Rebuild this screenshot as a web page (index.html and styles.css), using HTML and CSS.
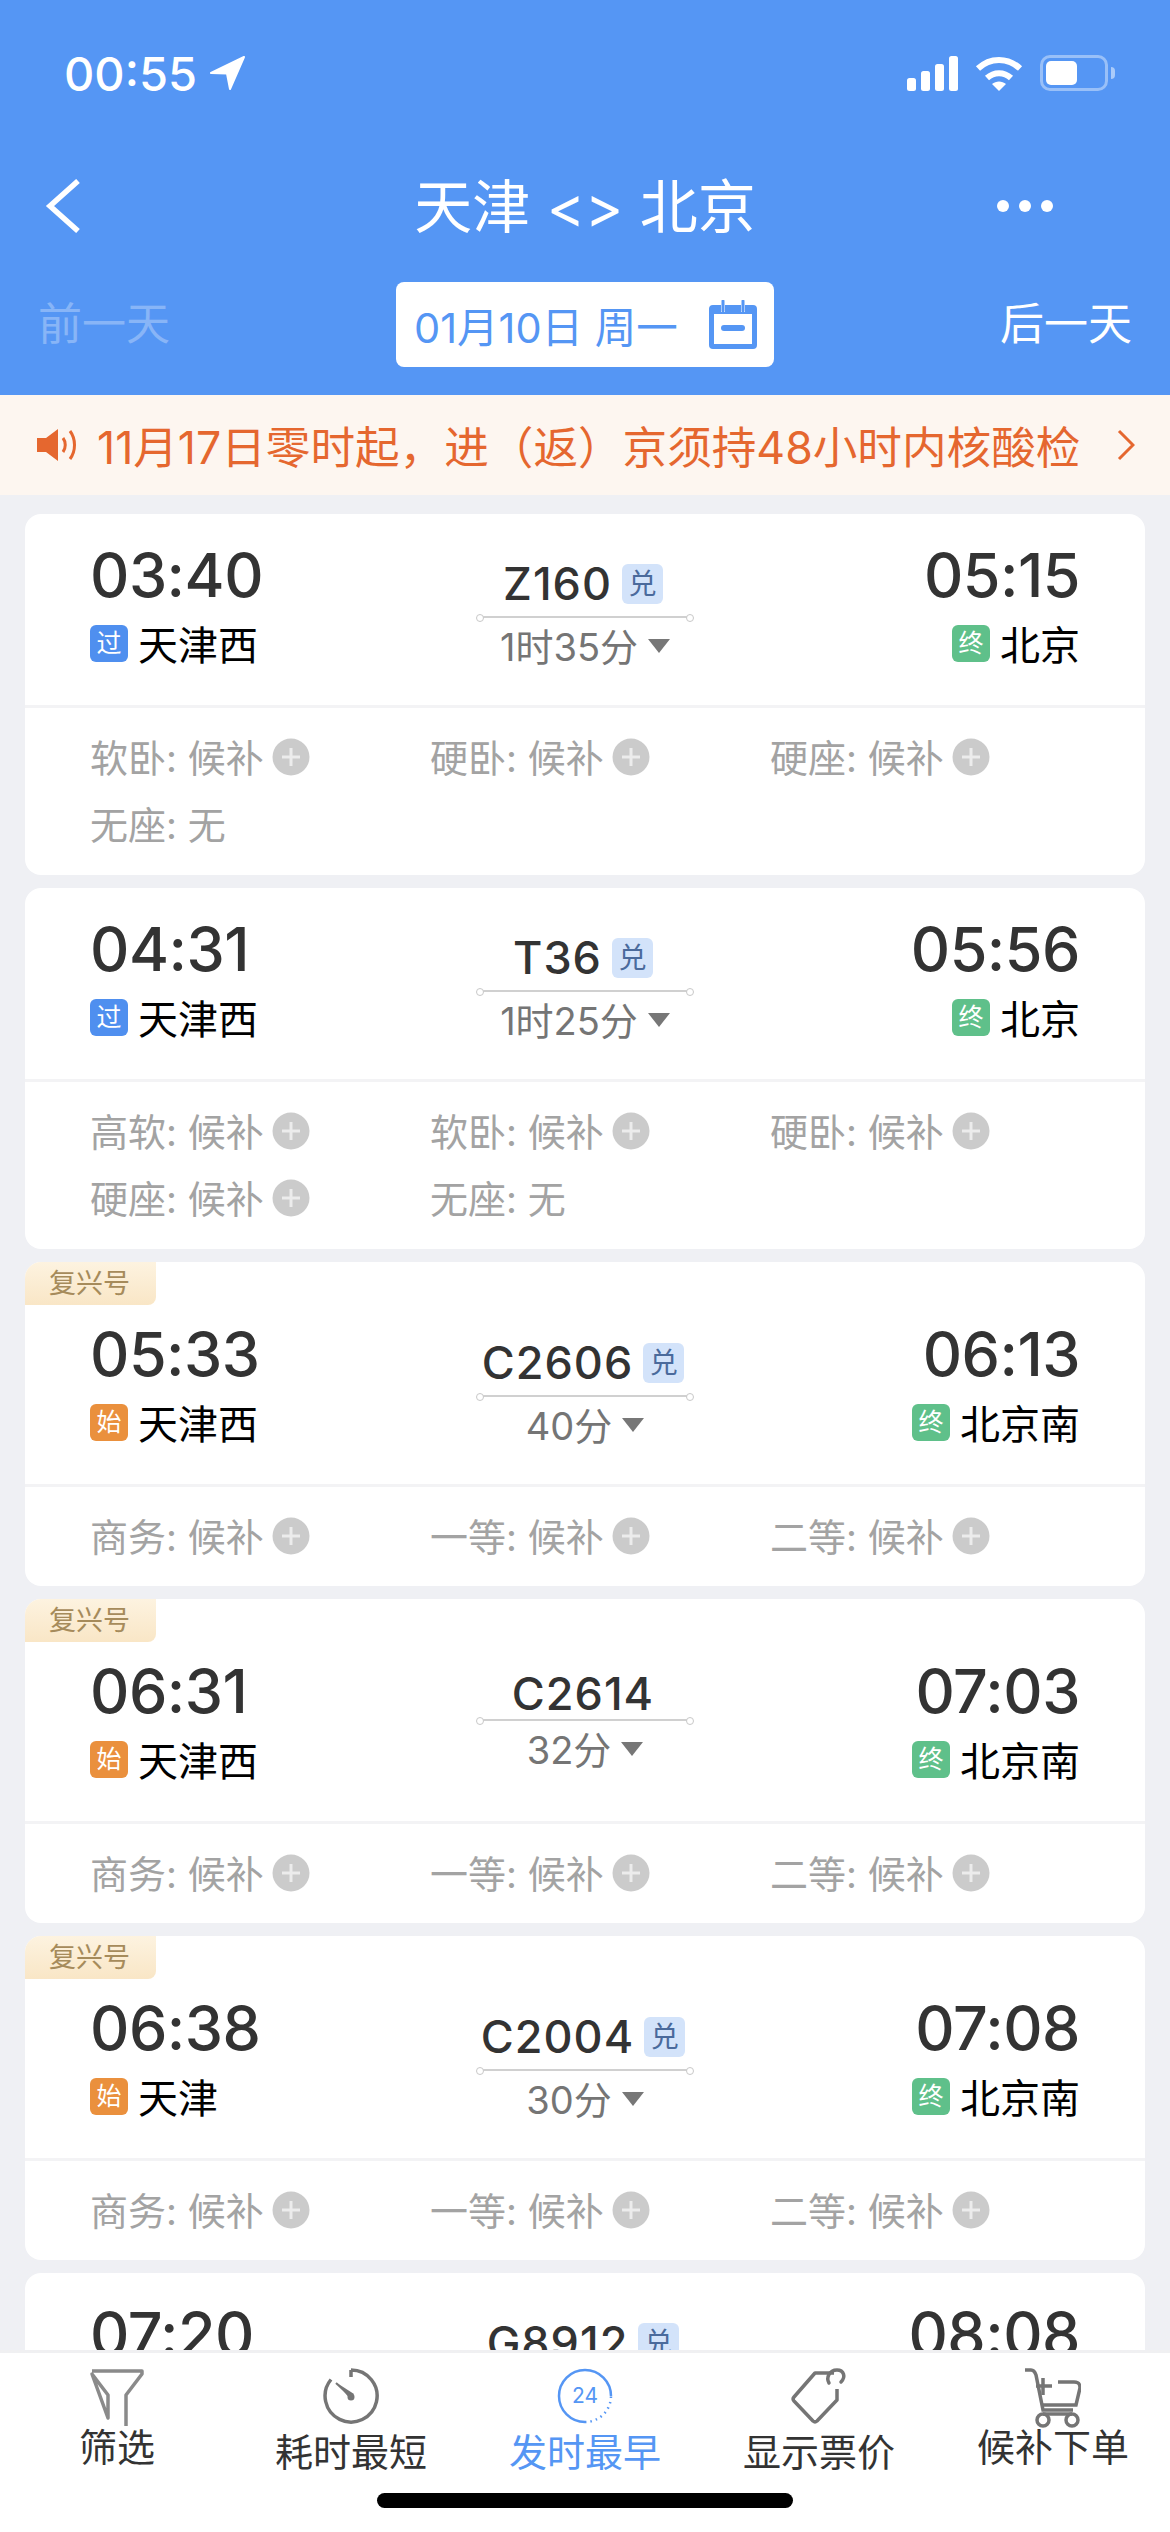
FILE: index.html
```html
<!doctype html>
<html lang="zh-CN">
  <head>
    <meta charset="UTF-8" />
    <meta name="viewport" content="width=device-width, initial-scale=1.0" />
    <title>天津 &lt;&gt; 北京</title>
    <link rel="stylesheet" href="styles.css">
  </head>
  <body>
    <svg class="defs" width="0" height="0">
      <symbol id="add" viewBox="0 0 38 38">
        <circle cx="19" cy="19" r="18.5" fill="#cbcbcb" />
        <path d="M19 10v18M10 19h18" stroke="#ececec" stroke-width="3" />
      </symbol>
    </svg>

    <header class="top">
      <div class="status">
        <div class="clock">
          <span>00:55</span>
          <svg width="37" height="36" viewBox="0 0 37 36"><path d="M35 2 2 18l16 .5L21 34z" fill="#fff" stroke="#fff" stroke-width="2" stroke-linejoin="round" /></svg>
        </div>
        <div class="sys">
          <svg width="51" height="35" viewBox="0 0 51 35" fill="#fff">
            <rect x="0" y="22" width="9" height="13" rx="2.500" />
            <rect x="14" y="15" width="9" height="20" rx="2.500" />
            <rect x="28" y="8" width="9" height="27" rx="2.500" />
            <rect x="42" y="0" width="9" height="35" rx="2.500" />
          </svg>
          <svg width="48" height="36" viewBox="0 0 48 36" fill="none" stroke="#fff" stroke-width="6">
            <path d="M3 13.500c12-11.500 30-11.500 42 0" />
            <path d="M12 23c7-6.500 17-6.500 24 0" />
            <path d="M17 29c4-3.500 10-3.500 14 0l-7 7z" fill="#fff" stroke="none" />
          </svg>
          <div class="battery"><div class="battery-fill"></div></div>
        </div>
      </div>

      <div class="nav">
        <svg class="back" width="36" height="54" viewBox="0 0 36 54" fill="none" stroke="#fff" stroke-width="5.500"><path d="M33 2 5 27l28 25" /></svg>
        <h1>天津 &lt;&gt; 北京</h1>
        <div class="more"><i></i><i></i><i></i></div>
      </div>

      <div class="dates">
        <span class="day off">前一天</span>
        <div class="picker">
          <span>01月10日 周一</span>
          <svg width="50" height="50" viewBox="0 0 50 50">
            <path d="M5 5h8v7h4V5h16v7h4V5h8a4 4 0 0 1 4 4v36a4 4 0 0 1-4 4H5a4 4 0 0 1-4-4V9a4 4 0 0 1 4-4z" fill="#5596f4" />
            <rect x="6" y="14" width="38" height="30" fill="#fff" />
            <rect x="13" y="25" width="24" height="6" rx="3" fill="#5596f4" />
            <path d="M15 1v10M35 1v10" stroke="#5596f4" stroke-width="3" stroke-linecap="round" />
          </svg>
        </div>
        <span class="day">后一天</span>
      </div>
    </header>

    <div class="notice">
      <svg width="42" height="34" viewBox="0 0 42 34" fill="none" stroke="#e5672f">
        <path d="M0 10h9L21 1v32L9 24H0z" fill="#e5672f" stroke="none" />
        <path d="M26 10c3 4 3 10 0 14" stroke-width="3" />
        <path d="M33 3c6 8 6 20 0 28" stroke-width="3" />
      </svg>
      <span class="notice-text">11月17日零时起，进（返）京须持48小时内核酸检</span>
      <svg class="notice-go" width="18" height="32" viewBox="0 0 18 32" fill="none" stroke="#e5672f" stroke-width="3"><path d="M2 2l14 14L2 30" /></svg>
    </div>

    <main class="list">
      <section class="card">
        <div class="card-top">
          <div class="end">
            <div class="time">03:40</div>
            <div class="station"><b class="tag pass">过</b>天津西</div>
          </div>
          <div class="mid">
            <div class="train">Z160<b>兑</b></div>
            <div class="track"></div>
            <div class="dur">1时35分<i></i></div>
          </div>
          <div class="end right">
            <div class="time">05:15</div>
            <div class="station"><b class="tag last">终</b>北京</div>
          </div>
        </div>
        <div class="seats">
          <div class="seat">软卧: 候补<svg><use href="#add" /></svg></div>
          <div class="seat">硬卧: 候补<svg><use href="#add" /></svg></div>
          <div class="seat">硬座: 候补<svg><use href="#add" /></svg></div>
          <div class="seat">无座: 无</div>
        </div>
      </section>

      <section class="card">
        <div class="card-top">
          <div class="end">
            <div class="time">04:31</div>
            <div class="station"><b class="tag pass">过</b>天津西</div>
          </div>
          <div class="mid">
            <div class="train">T36<b>兑</b></div>
            <div class="track"></div>
            <div class="dur">1时25分<i></i></div>
          </div>
          <div class="end right">
            <div class="time">05:56</div>
            <div class="station"><b class="tag last">终</b>北京</div>
          </div>
        </div>
        <div class="seats">
          <div class="seat">高软: 候补<svg><use href="#add" /></svg></div>
          <div class="seat">软卧: 候补<svg><use href="#add" /></svg></div>
          <div class="seat">硬卧: 候补<svg><use href="#add" /></svg></div>
          <div class="seat">硬座: 候补<svg><use href="#add" /></svg></div>
          <div class="seat">无座: 无</div>
        </div>
      </section>

      <section class="card fuxing">
        <div class="ribbon">复兴号</div>
        <div class="card-top">
          <div class="end">
            <div class="time">05:33</div>
            <div class="station"><b class="tag first">始</b>天津西</div>
          </div>
          <div class="mid">
            <div class="train">C2606<b>兑</b></div>
            <div class="track"></div>
            <div class="dur">40分<i></i></div>
          </div>
          <div class="end right">
            <div class="time">06:13</div>
            <div class="station"><b class="tag last">终</b>北京南</div>
          </div>
        </div>
        <div class="seats">
          <div class="seat">商务: 候补<svg><use href="#add" /></svg></div>
          <div class="seat">一等: 候补<svg><use href="#add" /></svg></div>
          <div class="seat">二等: 候补<svg><use href="#add" /></svg></div>
        </div>
      </section>

      <section class="card fuxing">
        <div class="ribbon">复兴号</div>
        <div class="card-top">
          <div class="end">
            <div class="time">06:31</div>
            <div class="station"><b class="tag first">始</b>天津西</div>
          </div>
          <div class="mid plain">
            <div class="train">C2614</div>
            <div class="track"></div>
            <div class="dur">32分<i></i></div>
          </div>
          <div class="end right">
            <div class="time">07:03</div>
            <div class="station"><b class="tag last">终</b>北京南</div>
          </div>
        </div>
        <div class="seats">
          <div class="seat">商务: 候补<svg><use href="#add" /></svg></div>
          <div class="seat">一等: 候补<svg><use href="#add" /></svg></div>
          <div class="seat">二等: 候补<svg><use href="#add" /></svg></div>
        </div>
      </section>

      <section class="card fuxing">
        <div class="ribbon">复兴号</div>
        <div class="card-top">
          <div class="end">
            <div class="time">06:38</div>
            <div class="station"><b class="tag first">始</b>天津</div>
          </div>
          <div class="mid">
            <div class="train">C2004<b>兑</b></div>
            <div class="track"></div>
            <div class="dur">30分<i></i></div>
          </div>
          <div class="end right">
            <div class="time">07:08</div>
            <div class="station"><b class="tag last">终</b>北京南</div>
          </div>
        </div>
        <div class="seats">
          <div class="seat">商务: 候补<svg><use href="#add" /></svg></div>
          <div class="seat">一等: 候补<svg><use href="#add" /></svg></div>
          <div class="seat">二等: 候补<svg><use href="#add" /></svg></div>
        </div>
      </section>

      <section class="card">
        <div class="card-top">
          <div class="end">
            <div class="time">07:20</div>
          </div>
          <div class="mid">
            <div class="train">G8912<b>兑</b></div>
          </div>
          <div class="end right">
            <div class="time">08:08</div>
          </div>
        </div>
      </section>
    </main>

    <footer class="tabs">
      <div class="tab-row">
        <div class="tab raised">
          <svg width="56" height="60" viewBox="0 0 56 60" fill="none" stroke="#8a8a8a" stroke-width="3.500">
            <path d="M3 3h50v3L37 27v31M19 50V27L3 6z" stroke-linejoin="round" />
          </svg>
          <span>筛选</span>
        </div>
        <div class="tab">
          <svg width="56" height="56" viewBox="0 0 56 56" fill="none" stroke="#757575" stroke-width="3.500">
            <path d="M28 2a26 26 0 1 1-20 9.500M28 2v7" />
            <path d="M13 15l15 14" stroke-width="2" />
            <path d="M14 15l17 11-4 5z" fill="#757575" stroke="none" />
            <circle cx="28" cy="29" r="3.500" fill="#757575" stroke="none" />
          </svg>
          <span>耗时最短</span>
        </div>
        <div class="tab on">
          <svg width="56" height="56" viewBox="0 0 56 56" fill="none" stroke="#5596f4" stroke-width="2.500">
            <path d="M54 28A26 26 0 1 0 28 54" />
            <path d="M28 54a26 26 0 0 0 26-26" stroke-dasharray="1.500 4" />
            <text x="28" y="35" text-anchor="middle" class="day-num">24</text>
          </svg>
          <span>发时最早</span>
        </div>
        <div class="tab">
          <svg width="56" height="56" viewBox="0 0 56 56" fill="none" stroke="#757575" stroke-width="3.500" stroke-linejoin="round">
            <path d="M43 5H24L3 29a3 3 0 0 0 0 4l19 20a3 3 0 0 0 4 0l20-21V21" />
            <path d="M38 15c-3-5 0-13 8-13 7 0 9 7 4 12" stroke-linecap="round" />
          </svg>
          <span>显示票价</span>
        </div>
        <div class="tab raised">
          <svg width="56" height="60" viewBox="0 0 56 60" fill="none" stroke="#757575" stroke-width="3.500">
            <path d="M0 2h6c3 0 4 2 5 5l7 35h30" />
            <path d="M18 10v17M11 18h16M33 14h16c5 0 6 2 6 6l-4 17H18" />
            <circle cx="18" cy="52" r="6" />
            <circle cx="47" cy="52" r="6" />
            <path d="M18 46h29" />
          </svg>
          <span>候补下单</span>
        </div>
      </div>
      <div class="home-bar"></div>
    </footer>
  </body>
</html>
```

FILE: styles.css
```css
* {
  margin: 0;
  padding: 0;
  box-sizing: border-box;
}

body {
  width: 1170px;
  height: 2532px;
  overflow: hidden;
  display: flex;
  flex-direction: column;
  background: #eff0f4;
  color: #333333;
  font-family: Inter, "Noto Sans CJK SC", sans-serif;
}

.defs {
  position: absolute;
}

/* Blue header */
.top {
  height: 395px;
  flex: none;
  background: #5596f4;
  color: #ffffff;
}

.status {
  height: 146px;
  padding: 49px 62px 0 64px;
  display: flex;
  justify-content: space-between;
  align-items: flex-start;
}

.clock {
  display: flex;
  align-items: center;
  gap: 12px;
  height: 48px;
  font-size: 47px;
  font-weight: 500;
}

.sys {
  display: flex;
  align-items: center;
  gap: 17px;
  height: 48px;
}

.battery {
  position: relative;
  width: 68px;
  height: 36px;
  border: 3px solid rgba(255, 255, 255, 0.4);
  border-radius: 10px;
  padding: 3px;
}

.battery::after {
  content: "";
  position: absolute;
  right: -10px;
  top: 9px;
  width: 4px;
  height: 12px;
  border-radius: 0 4px 4px 0;
  background: rgba(255, 255, 255, 0.5);
}

.battery-fill {
  width: 31px;
  height: 100%;
  border-radius: 5px;
  background: #ffffff;
}

.nav {
  height: 120px;
  padding: 0 45px;
  display: grid;
  grid-template-columns: 1fr auto 1fr;
  align-items: center;
}

.nav h1 {
  margin-top: -6px;
  font-size: 58px;
  font-weight: 400;
}

.more {
  justify-self: end;
  margin-right: 72px;
  display: flex;
  gap: 10px;
}

.more i {
  width: 12px;
  height: 12px;
  border-radius: 50%;
  background: #ffffff;
}

.dates {
  height: 129px;
  padding: 16px 38px 0;
  display: flex;
  justify-content: space-between;
  align-items: flex-start;
}

.day {
  height: 85px;
  line-height: 85px;
  font-size: 44px;
}

.off {
  opacity: 0.3;
}

.picker {
  width: 378px;
  height: 85px;
  padding: 0 16px 0 18px;
  display: flex;
  align-items: center;
  justify-content: space-between;
  background: #ffffff;
  border-radius: 8px;
  color: #5596f4;
  font-size: 41.500px;
}

/* Orange announcement strip */
.notice {
  height: 100px;
  flex: none;
  padding: 0 35px 0 37px;
  display: flex;
  align-items: center;
  background: #fdf6f0;
  color: #e5672f;
  font-size: 44.600px;
}

.notice-text {
  margin: -2px 0 0 18px;
  white-space: nowrap;
}

.notice-go {
  margin-left: auto;
}

/* Train cards */
.list {
  flex: 1;
  min-height: 0;
  overflow: hidden;
  padding: 19px 25px 0;
  display: flex;
  flex-direction: column;
  gap: 13px;
}

.card {
  position: relative;
  flex: none;
  background: #ffffff;
  border-radius: 16px;
  overflow: hidden;
}

.ribbon {
  position: absolute;
  left: 0;
  top: 0;
  width: 131px;
  height: 43px;
  padding-left: 24px;
  line-height: 43px;
  font-size: 27px;
  color: #a68b5b;
  background: linear-gradient(180deg, #fdf3e0 0%, #f9e6c6 100%);
  border-radius: 0 0 8px 0;
}

.card-top {
  height: 194px;
  padding: 29px 65px 0;
  display: grid;
  grid-template-columns: 1fr 216px 1fr;
  border-bottom: 3px solid #f3f3f5;
}

.fuxing .card-top {
  height: 225px;
  padding-top: 60px;
}

.time {
  height: 64px;
  line-height: 64px;
  font-size: 61px;
  font-weight: 500;
  letter-spacing: -0.500px;
}

.station {
  margin-top: 16px;
  height: 40px;
  display: flex;
  align-items: center;
  font-size: 40px;
  color: #000000;
}

.right {
  display: flex;
  flex-direction: column;
  align-items: flex-end;
}

.tag {
  width: 38px;
  height: 37px;
  margin-right: 10px;
  border-radius: 6px;
  line-height: 37px;
  text-align: center;
  font-size: 25px;
  font-weight: 400;
  color: #ffffff;
}

.pass {
  background: #4f8fef;
}

.first {
  background: #ea903d;
}

.last {
  background: #5fc08a;
}

.mid {
  padding-top: 18px;
  text-align: center;
}

.train {
  height: 46px;
  padding-right: 4px;
  line-height: 46px;
  display: flex;
  justify-content: center;
  align-items: center;
  gap: 10px;
  font-size: 45px;
  font-weight: 500;
  letter-spacing: 1px;
}

.train b {
  width: 41px;
  height: 40px;
  line-height: 40px;
  border-radius: 6px;
  background: #d3e3fa;
  color: #4a6a9c;
  font-size: 28px;
  font-weight: 400;
  letter-spacing: 0;
}

.track {
  position: relative;
  height: 2px;
  margin-top: 9px;
  background: #d0d0d0;
}

.track::before,
.track::after {
  content: "";
  position: absolute;
  top: -2px;
  width: 6px;
  height: 6px;
  border: 1px solid #c8c8c8;
  border-radius: 50%;
  background: #ffffff;
}

.track::before {
  left: -1px;
}

.track::after {
  right: -1px;
}

.dur {
  margin-top: 4px;
  height: 44px;
  display: flex;
  justify-content: center;
  align-items: center;
  gap: 10px;
  font-size: 38px;
  color: #757575;
}

.dur i {
  width: 0;
  height: 0;
  border-left: 11px solid transparent;
  border-right: 11px solid transparent;
  border-top: 14px solid #777777;
  margin-top: 4px;
}

.plain .train {
  margin-top: -6px;
}

.plain .track {
  margin-top: 2px;
}

.seats {
  padding: 25px 65px 31px;
  display: grid;
  grid-template-columns: repeat(3, 340px);
  row-gap: 23px;
}

.fuxing .seats {
  padding-bottom: 30px;
}

.seat {
  height: 44px;
  display: flex;
  align-items: center;
  gap: 8px;
  font-size: 38px;
  color: #a3a3a3;
}

.seat svg {
  width: 38px;
  height: 38px;
  margin-top: 3px;
}

/* Bottom tab bar */
.tabs {
  position: relative;
  height: 182px;
  flex: none;
  background: #ffffff;
  border-top: 3px solid #f0f0f2;
}

.tab-row {
  display: grid;
  grid-template-columns: repeat(5, 234px);
}

.tab {
  padding-top: 15px;
  display: flex;
  flex-direction: column;
  align-items: center;
  font-size: 38px;
  color: #333333;
}

.tab svg {
  display: block;
}

.tab span {
  margin-top: -2px;
}

.raised span {
  margin-top: -11px;
}

.on {
  color: #5596f4;
}

.day-num {
  font-size: 21px;
  fill: #5596f4;
  stroke: none;
}

.home-bar {
  position: absolute;
  left: 377px;
  top: 140px;
  width: 416px;
  height: 15px;
  border-radius: 8px;
  background: #000000;
}
```
